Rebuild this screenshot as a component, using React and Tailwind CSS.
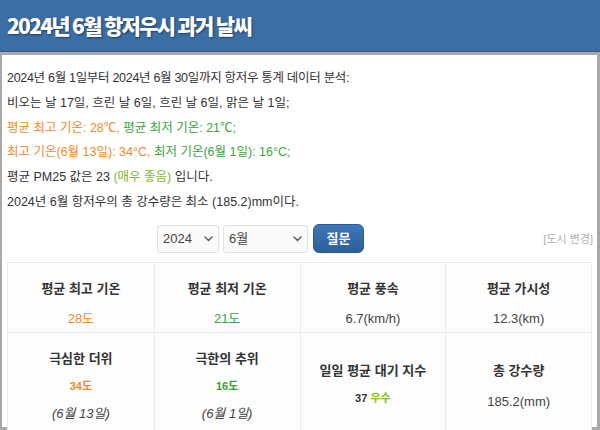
import React from 'react';

const font = { fontFamily: '"Liberation Sans", "Noto Sans CJK KR", "Noto Sans", sans-serif' };

const Chevron = () => (
  <svg width="9" height="6" viewBox="0 0 9 6" fill="none" stroke="#555" strokeWidth="1.4" strokeLinecap="round" strokeLinejoin="round">
    <path d="M1 1l3.5 3.5L8 1" />
  </svg>
);

const Cell = ({ title, children, first, top }) => (
  <div className={`flex flex-col items-center border-[#ebebeb] ${first ? '' : 'border-l'} ${top}`}>
    <div className="text-[13px] leading-[18px] font-bold text-[#333]">{title}</div>
    {children}
  </div>
);

export default function App() {
  return (
    <div className="w-[600px] h-[430px] bg-[#a9a9a9] overflow-hidden text-[#333]" style={font}>
      <div className="h-[52px] bg-[#3c6ea6] flex items-center px-[7px] border-b border-[#2f5c8f]">
        <h1
          className="text-white text-[21px] font-black tracking-[-1.7px] [text-shadow:1px_1px_2px_rgba(0,0,0,0.45)]"
          style={{ fontFamily: '"Noto Sans CJK KR", sans-serif' }}
        >
          2024년 6월 항저우시 과거 날씨
        </h1>
      </div>
      <div className="ml-[2px] mr-[3px] mt-[3px] h-[372px] bg-white pl-[5px] pr-[3px] pt-[11px]">
        <div className="text-[12.5px] leading-[24.8px] text-[#333]">
          <p className="tracking-[-0.3px]">2024년 6월 1일부터 2024년 6월 30일까지 항저우 통계 데이터 분석:</p>
          <p>비오는 날 17일, 흐린 날 6일, 흐린 날 6일, 맑은 날 1일;</p>
          <p>
            <span className="text-[#f08a2c]">평균 최고 기온: 28℃, </span>
            <span className="text-[#3aa53a]">평균 최저 기온: 21℃;</span>
          </p>
          <p>
            <span className="text-[#f08a2c]">최고 기온(6월 13일): 34°C, </span>
            <span className="text-[#3aa53a]">최저 기온(6월 1일): 16°C;</span>
          </p>
          <p>
            평균 PM25 값은 23 <span className="text-[#7cb82f]"> (매우 좋음)</span> 입니다.
          </p>
          <p>2024년 6월 항저우의 총 강수량은 최소 (185.2)mm이다.</p>
        </div>

        <div className="flex items-center mt-[10px] h-[28px]">
          <div className="ml-[150px] w-[62px] h-[28px] border border-[#e2e2e2] rounded-[3px] bg-[#fafafa] flex items-center justify-between px-[5px] text-[13px] text-[#444]">
            <span>2024</span>
            <Chevron />
          </div>
          <div className="ml-[4px] w-[85px] h-[28px] border border-[#e2e2e2] rounded-[3px] bg-[#fafafa] flex items-center justify-between px-[5px] text-[13px] text-[#444]">
            <span>6월</span>
            <Chevron />
          </div>
          <button className="ml-[5px] w-[51px] h-[29px] rounded-[6px] bg-gradient-to-b from-[#3f78b8] to-[#2b5f9a] text-white text-[13px] font-bold border border-[#2a5a92]">
            질문
          </button>
          <span className="ml-auto mr-[1px] text-[11px] text-[#b0b0b0]">[도시 변경]</span>
        </div>

        <div className="mt-[9px] w-[585px] border border-[#ebebeb] bg-[#fdfdfd]">
          <div className="grid grid-cols-4 h-[70px] border-b border-[#ebebeb]">
            <Cell title="평균 최고 기온" first top="pt-[17px]">
              <div className="mt-[12px] text-[13px] leading-[18px] text-[#f08a2c]">28도</div>
            </Cell>
            <Cell title="평균 최저 기온" top="pt-[17px]">
              <div className="mt-[12px] text-[13px] leading-[18px] text-[#3aa53a]">21도</div>
            </Cell>
            <Cell title="평균 풍속" top="pt-[17px]">
              <div className="mt-[12px] text-[13px] leading-[18px] text-[#444]">6.7(km/h)</div>
            </Cell>
            <Cell title="평균 가시성" top="pt-[17px]">
              <div className="mt-[12px] text-[13px] leading-[18px] text-[#444]">12.3(km)</div>
            </Cell>
          </div>
          <div className="grid grid-cols-4 h-[100px]">
            <Cell title="극심한 더위" first top="pt-[17px]">
              <div className="mt-[10px] text-[11px] leading-[16px] font-bold text-[#f08a2c]">34도</div>
              <div className="mt-[11px] text-[13px] leading-[18px] italic text-[#444]">(6월 13일)</div>
            </Cell>
            <Cell title="극한의 추위" top="pt-[17px]">
              <div className="mt-[10px] text-[11px] leading-[16px] font-bold text-[#2fa82f]">16도</div>
              <div className="mt-[11px] text-[13px] leading-[18px] italic text-[#444]">(6월 1일)</div>
            </Cell>
            <Cell title="일일 평균 대기 지수" top="pt-[29px]">
              <div className="mt-[10px] text-[11px] leading-[16px] font-bold text-[#333]">
                37 <span className="text-[#7cc21e]">우수</span>
              </div>
            </Cell>
            <Cell title="총 강수량" top="pt-[29px]">
              <div className="mt-[13px] text-[13px] leading-[18px] text-[#444]">185.2(mm)</div>
            </Cell>
          </div>
        </div>
      </div>
    </div>
  );
}
